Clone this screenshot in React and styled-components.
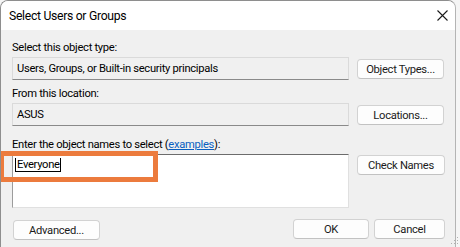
import React from 'react';
import styled, { createGlobalStyle } from 'styled-components';

const GlobalStyle = createGlobalStyle`
  html, body {
    margin: 0;
    padding: 0;
    background: #f5f5f5;
    overflow: hidden;
  }
  #root {
    width: 460px;
    height: 247px;
    overflow: hidden;
  }
`;

const Window = styled.div`
  position: relative;
  width: 456px;
  height: 262px;
  box-sizing: border-box;
  border: 1px solid #8e8e8e;
  border-right-color: #b4b4b4;
  border-radius: 8px 8px 0 0;
  background: #f0f0f0;
  overflow: hidden;
  font-family: Roboto, "Liberation Sans", sans-serif;
  font-size: 11.2px;
  letter-spacing: -0.3px;
  color: #000;
`;

const TitleBar = styled.div`
  height: 29px;
  background: #fff;
  display: flex;
  align-items: center;
  justify-content: space-between;
  padding: 0 7px 0 8px;
`;

const Title = styled.span`
  font-size: 12.2px;
  line-height: 16px;
  letter-spacing: -0.3px;
`;

const Close = styled.svg`
  width: 11px;
  height: 11px;
`;

const Body = styled.div`
  display: flex;
  flex-direction: column;
  padding: 0 10px 0 11px;
`;

const Label = styled.div`
  line-height: 14px;
  margin-top: ${(p) => p.$gap}px;
`;

const Link = styled.a`
  color: #0a5fc0;
  text-decoration: underline;
`;

const Row = styled.div`
  display: flex;
  gap: 8px;
  align-items: flex-start;
  margin-top: 2px;
`;

const ReadField = styled.div`
  width: 337px;
  height: 23px;
  box-sizing: border-box;
  border: 1px solid #dadada;
  border-bottom-color: #8a8a8a;
  background: #f0f0f0;
  padding-left: 4px;
  display: flex;
  align-items: center;
`;

const EditArea = styled.div`
  width: 337px;
  height: 54px;
  box-sizing: border-box;
  background: #fff;
  border: 1px solid #e0e0e0;
  border-top-color: #6c6c6c;
  border-left-color: #9c9c9c;
  padding: 3px 0 0 2px;
`;

const Selected = styled.span`
  display: inline-block;
  line-height: 13px;
  padding: 0 0 0 1px;
  border-left: 1px solid #000;
  border-bottom: 1px solid #000;
  border-right: 1px solid #000;
`;

const Button = styled.button`
  width: ${(p) => p.$w || 87}px;
  height: 20px;
  margin-top: ${(p) => p.$top || 0}px;
  margin-left: ${(p) => p.$left || 0}px;
  box-sizing: border-box;
  padding: 0;
  border: 1px solid #d2d2d2;
  border-bottom-color: #c2c2c2;
  border-radius: 4px;
  background: #fdfdfd;
  font-family: inherit;
  font-size: inherit;
  letter-spacing: inherit;
  color: #1b1b1b;
`;

const Footer = styled.div`
  display: flex;
  align-items: flex-start;
  margin-top: 11px;
  gap: 5px;
`;

const Spacer = styled.div`
  flex: 1;
`;

const Highlight = styled.div`
  position: absolute;
  left: -2px;
  top: 150px;
  width: 159px;
  height: 31px;
  box-sizing: border-box;
  border: 5px solid #ec7b3d;
  pointer-events: none;
`;

const Grip = styled.svg`
  position: absolute;
  right: 1px;
  bottom: 2px;
  width: 8px;
  height: 8px;
`;

export default function App() {
  return (
    <>
      <GlobalStyle />
      <Window>
        <TitleBar>
          <Title>Select Users or Groups</Title>
          <Close viewBox="0 0 11 11">
            <path d="M0.5 0.5 L10.5 10.5 M10.5 0.5 L0.5 10.5" stroke="#1a1a1a" strokeWidth="1.1" fill="none" />
          </Close>
        </TitleBar>
        <Body>
          <Label $gap={11}>Select this object type:</Label>
          <Row>
            <ReadField>Users, Groups, or Built-in security principals</ReadField>
            <Button $top={2}>Object Types...</Button>
          </Row>
          <Label $gap={7}>From this location:</Label>
          <Row>
            <ReadField>ASUS</ReadField>
            <Button $top={2}>Locations...</Button>
          </Row>
          <Label $gap={12}>
            Enter the object names to select (<Link>examples</Link>):
          </Label>
          <Row>
            <EditArea>
              <Selected>Everyone</Selected>
            </EditArea>
            <Button $top={1} $w={88}>Check Names</Button>
          </Row>
          <Footer>
            <Button $top={1} $left={1}>Advanced...</Button>
            <Spacer />
            <Button $w={76}>OK</Button>
            <Button $w={71}>Cancel</Button>
          </Footer>
        </Body>
        <Highlight />
      </Window>
      <Grip viewBox="0 0 8 8">
        <rect x="6" y="0" width="1" height="1" fill="#b0b0b0" />
        <rect x="3" y="3" width="1" height="1" fill="#b0b0b0" />
        <rect x="6" y="3" width="1" height="1" fill="#b0b0b0" />
        <rect x="0" y="6" width="1" height="1" fill="#b0b0b0" />
        <rect x="3" y="6" width="1" height="1" fill="#b0b0b0" />
        <rect x="6" y="6" width="1" height="1" fill="#b0b0b0" />
      </Grip>
    </>
  );
}
